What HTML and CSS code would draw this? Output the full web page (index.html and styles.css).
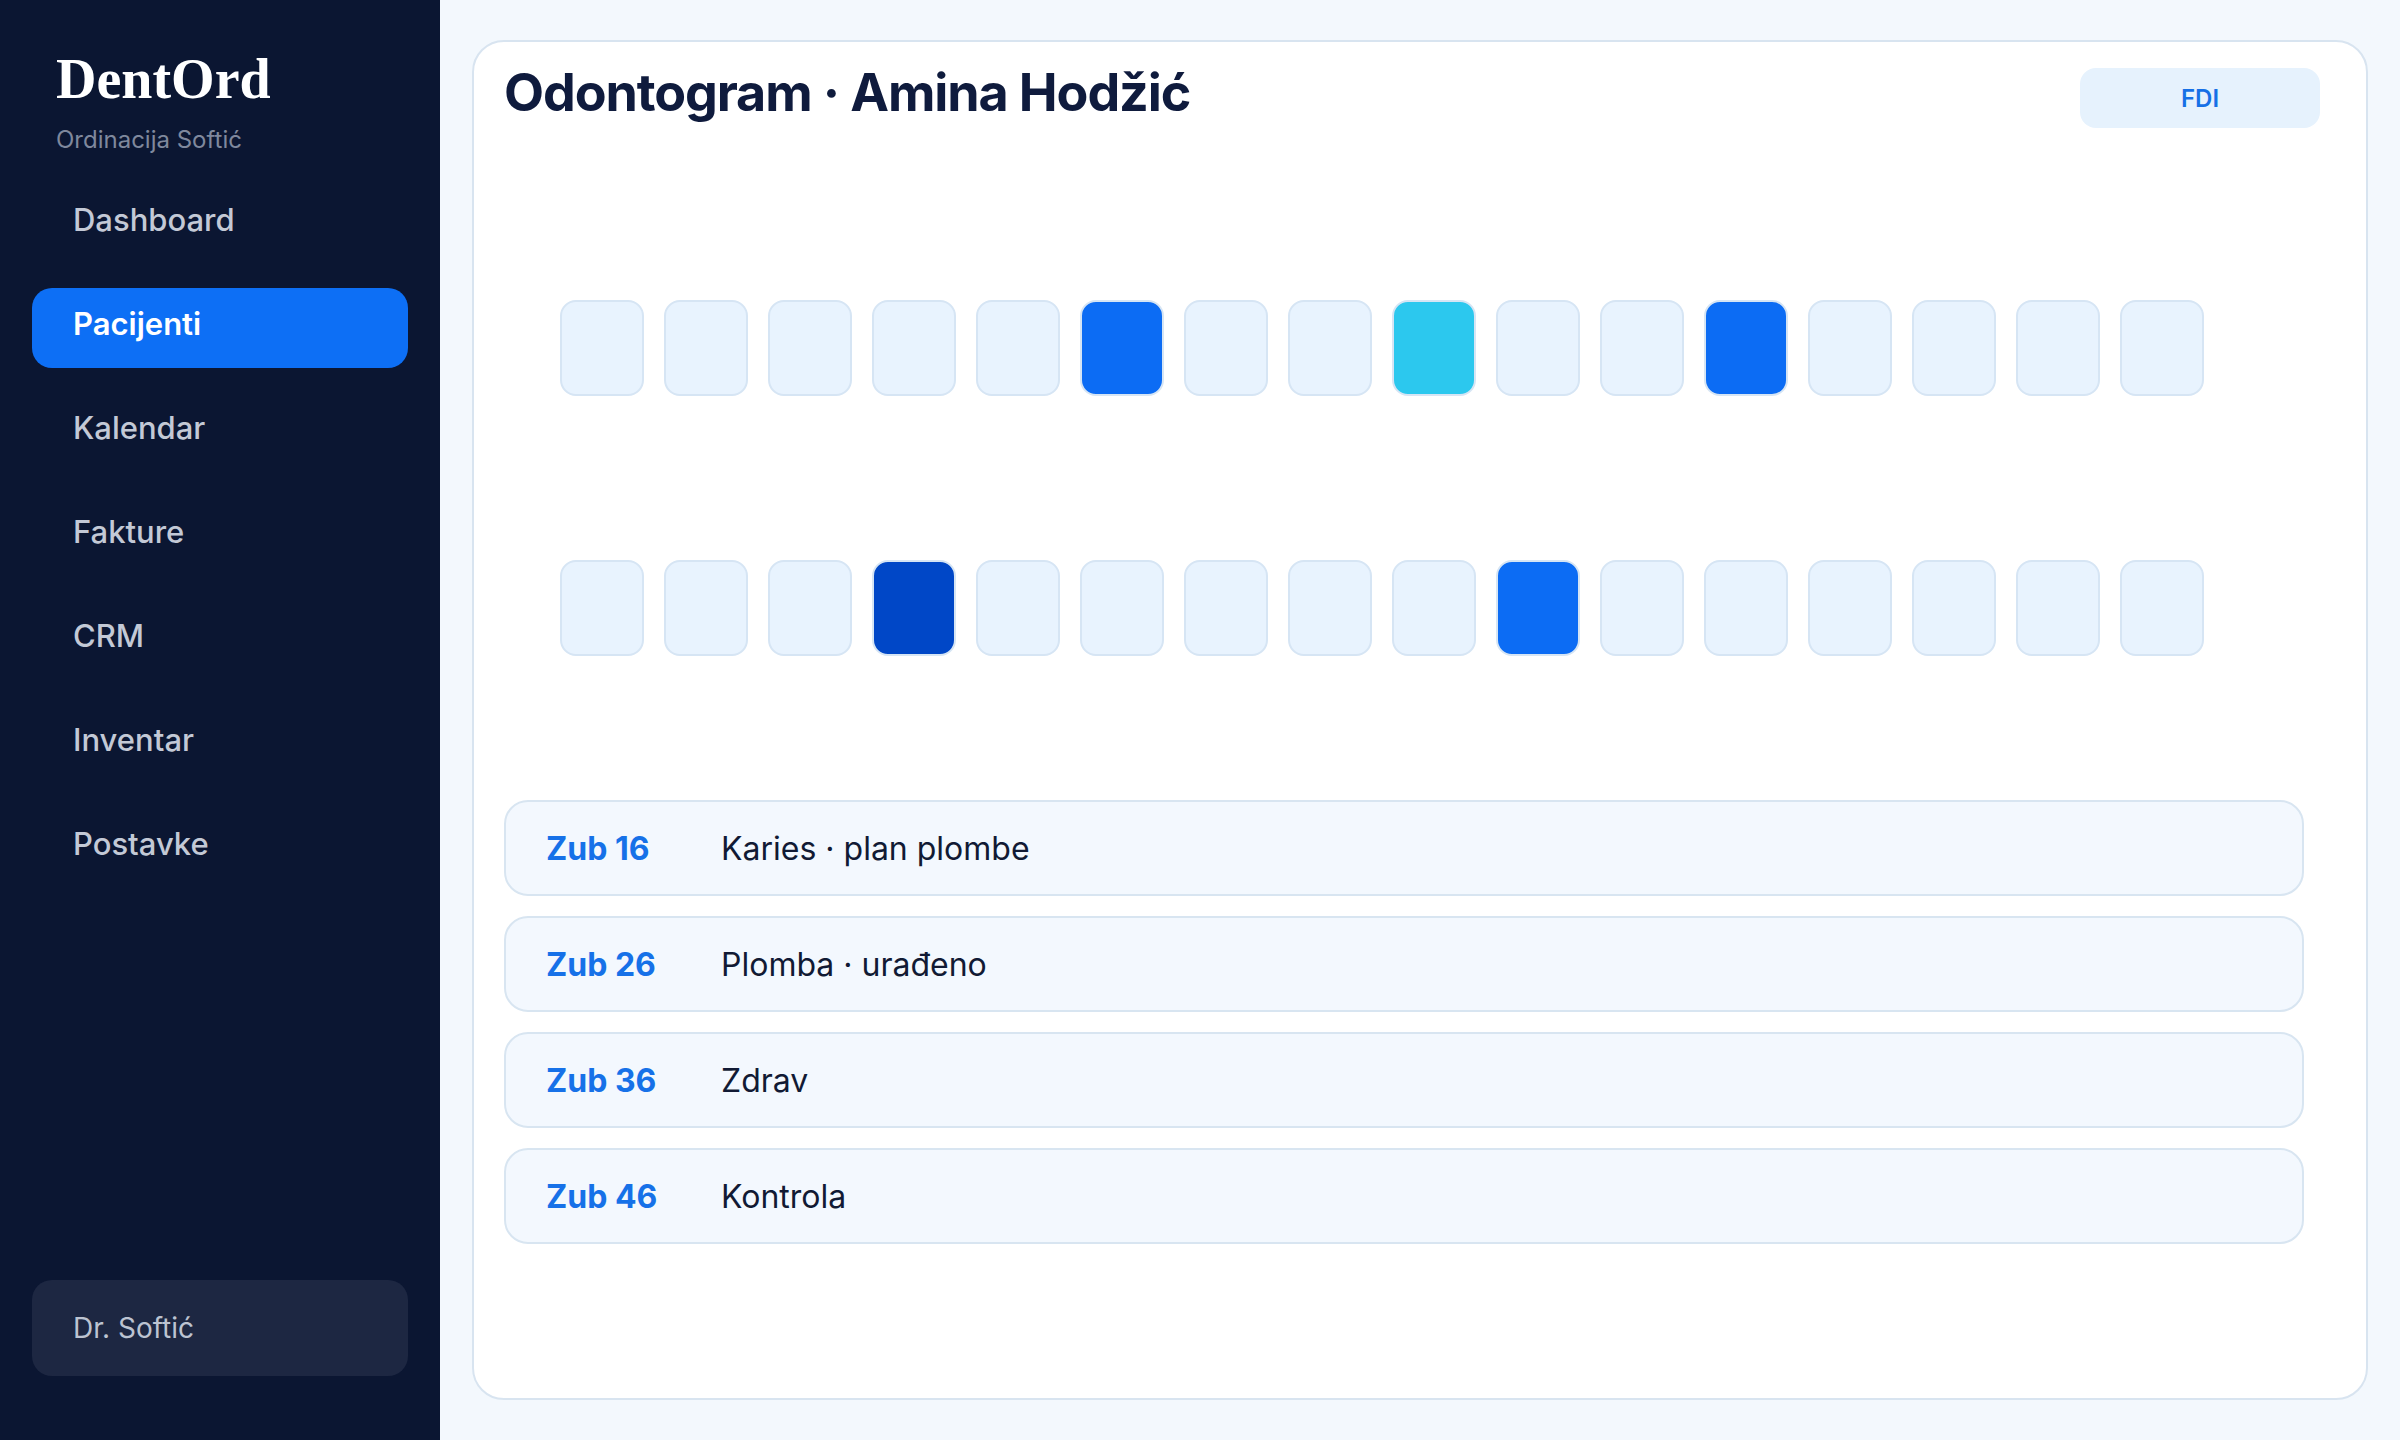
FILE: index.html
```html
<!DOCTYPE html>
<html lang="bs">
<head>
    <meta charset="UTF-8">
    <meta name="viewport" content="width=device-width, initial-scale=1.0">
    <title>DentOrd · Odontogram</title>
    <link rel="stylesheet" href="styles.css">
</head>
<body>

    <aside class="sidebar">
        <div class="brand">
            <div class="brand-name">DentOrd</div>
            <div class="brand-sub">Ordinacija Softić</div>
        </div>

        <nav class="nav">
            <a class="nav-item" href="#">Dashboard</a>
            <a class="nav-item active" href="#">Pacijenti</a>
            <a class="nav-item" href="#">Kalendar</a>
            <a class="nav-item" href="#">Fakture</a>
            <a class="nav-item" href="#">CRM</a>
            <a class="nav-item" href="#">Inventar</a>
            <a class="nav-item" href="#">Postavke</a>
        </nav>

        <div class="user-box">Dr. Softić</div>
    </aside>

    <main class="main">
        <section class="card">
            <div class="card-header">
                <h1 class="title">Odontogram · Amina Hodžić</h1>
                <button class="fdi-button">FDI</button>
            </div>

            <!-- gornja i donja vilica, 16 zuba po redu -->
            <div class="teeth">
                <div class="teeth-row">
                    <div class="tooth"></div>
                    <div class="tooth"></div>
                    <div class="tooth"></div>
                    <div class="tooth"></div>
                    <div class="tooth"></div>
                    <div class="tooth caries"></div>
                    <div class="tooth"></div>
                    <div class="tooth"></div>
                    <div class="tooth control"></div>
                    <div class="tooth"></div>
                    <div class="tooth"></div>
                    <div class="tooth caries"></div>
                    <div class="tooth"></div>
                    <div class="tooth"></div>
                    <div class="tooth"></div>
                    <div class="tooth"></div>
                </div>
                <div class="teeth-row">
                    <div class="tooth"></div>
                    <div class="tooth"></div>
                    <div class="tooth"></div>
                    <div class="tooth filled"></div>
                    <div class="tooth"></div>
                    <div class="tooth"></div>
                    <div class="tooth"></div>
                    <div class="tooth"></div>
                    <div class="tooth"></div>
                    <div class="tooth caries"></div>
                    <div class="tooth"></div>
                    <div class="tooth"></div>
                    <div class="tooth"></div>
                    <div class="tooth"></div>
                    <div class="tooth"></div>
                    <div class="tooth"></div>
                </div>
            </div>

            <div class="notes">
                <div class="note-row">
                    <span class="note-tooth">Zub 16</span>
                    <span class="note-text">Karies · plan plombe</span>
                </div>
                <div class="note-row">
                    <span class="note-tooth">Zub 26</span>
                    <span class="note-text">Plomba · urađeno</span>
                </div>
                <div class="note-row">
                    <span class="note-tooth">Zub 36</span>
                    <span class="note-text">Zdrav</span>
                </div>
                <div class="note-row">
                    <span class="note-tooth">Zub 46</span>
                    <span class="note-text">Kontrola</span>
                </div>
            </div>
        </section>
    </main>

</body>
</html>
```

FILE: styles.css
```css
* {
    box-sizing: border-box;
}

body {
    margin: 0;
    padding: 0;
    display: flex;
    height: 1440px;
    background-color: #f3f8fd;
    font-family: Inter, "Noto Sans", sans-serif;
    color: #0f1b3d;
}

/* sidebar */
.sidebar {
    width: 440px;
    flex-shrink: 0;
    display: flex;
    flex-direction: column;
    padding: 47px 32px 64px;
    background-color: #0b1632;
}

.brand {
    padding-left: 24px;
}

.brand-name {
    font-family: "Liberation Serif", serif;
    font-weight: bold;
    font-size: 56px;
    line-height: 64px;
    color: #ffffff;
}

.brand-sub {
    margin-top: 13px;
    font-size: 24px;
    line-height: 32px;
    color: #7f889d;
}

.nav {
    display: flex;
    flex-direction: column;
    gap: 24px;
    margin-top: 28px;
}

.nav-item {
    display: block;
    height: 80px;
    padding: 14px 40px 22px 41px;
    border-radius: 20px;
    font-size: 31px;
    font-weight: 500;
    line-height: 44px;
    color: #c3c9d6;
    text-decoration: none;
}

.nav-item.active {
    background-color: #0d6ff5;
    color: #ffffff;
    font-weight: 600;
}

.user-box {
    margin-top: auto;
    height: 96px;
    display: flex;
    align-items: center;
    padding-left: 41px;
    border-radius: 20px;
    background-color: #1d2742;
    font-size: 28px;
    color: #bcc3d1;
}

/* main */
.main {
    flex: 1;
    padding: 40px 32px;
}

.card {
    height: 100%;
    padding: 26px 30px 30px;
    background-color: #ffffff;
    border: 2px solid #d8e4f0;
    border-radius: 32px;
}

.card-header {
    display: flex;
    justify-content: space-between;
    align-items: flex-start;
}

.title {
    margin: 0;
    font-size: 52px;
    font-weight: 700;
    line-height: 50px;
    letter-spacing: -1.1px;
    color: #0f1b3d;
}

.fdi-button {
    width: 240px;
    height: 60px;
    margin-right: 16px;
    border: none;
    border-radius: 16px;
    background-color: #e6f2fd;
    font-family: Inter, sans-serif;
    font-size: 24px;
    font-weight: 600;
    color: #1670e6;
    cursor: pointer;
}

.teeth {
    margin-top: 172px;
    padding-left: 56px;
    display: flex;
    flex-direction: column;
    gap: 164px;
}

.teeth-row {
    display: flex;
    gap: 20px;
}

.tooth {
    width: 84px;
    height: 96px;
    border: 2px solid #d6e5f4;
    border-radius: 16px;
    background-color: #e8f3fe;
}

.tooth.caries {
    background-color: #0c6cf4;
}

.tooth.control {
    background-color: #2cc8ee;
}

.tooth.filled {
    background-color: #0047c7;
}

.notes {
    margin-top: 144px;
    margin-right: 32px;
    display: flex;
    flex-direction: column;
    gap: 20px;
}

.note-row {
    height: 96px;
    display: grid;
    grid-template-columns: 175px 1fr;
    align-items: center;
    padding: 0 40px;
    border: 2px solid #d8e5f1;
    border-radius: 24px;
    background-color: #f3f8fe;
    font-size: 32px;
}

.note-tooth {
    font-weight: 700;
    color: #1671e8;
}

.note-text {
    color: #111a34;
}
```
